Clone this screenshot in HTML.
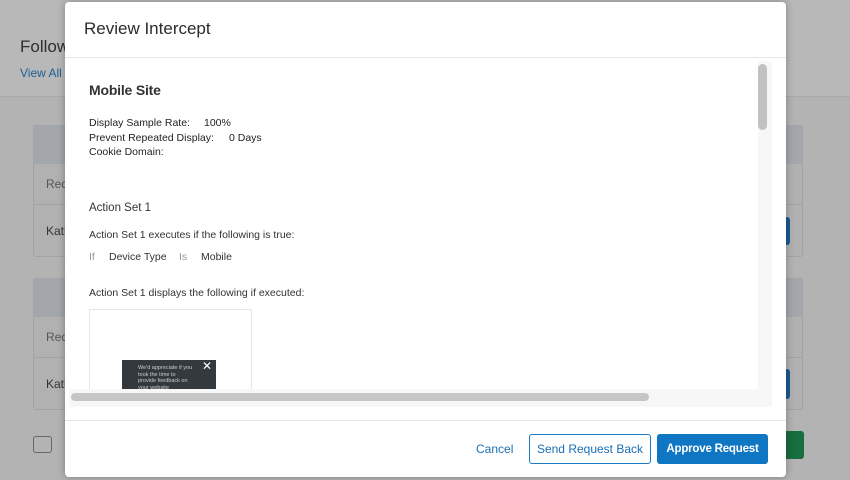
<!DOCTYPE html>
<html><head><style>
*{margin:0;padding:0;box-sizing:border-box}
body{width:850px;height:480px;overflow:hidden;background:#b3b3b3;font-family:"Liberation Sans",Arial,sans-serif;position:relative;color:#333}
.a{position:absolute;white-space:nowrap}
</style></head><body>
<div class="a" style="left:0;top:0;width:850px;height:97px;background:#b8b8b8;border-bottom:1px solid #a9a9a9"></div>
<div class="a" style="left:20px;top:37px;font-size:17px;color:#2e2e2e">Follow</div>
<div class="a" style="left:20px;top:66px;font-size:12px;color:#1a5f94">View All</div>
<div class="a" style="left:33px;top:125px;width:770px;height:132px;background:#b1b1b1;border:1px solid #a3a3a3;border-radius:3px"></div>
<div class="a" style="left:33px;top:125px;width:770px;height:39px;background:#a3a7ab"></div>
<div class="a" style="left:33px;top:204px;width:770px;height:1px;background:#a3a3a3"></div>
<div class="a" style="left:46px;top:177px;font-size:12px;color:#555">Req</div>
<div class="a" style="left:46px;top:224px;font-size:12px;color:#333">Kath</div>
<div class="a" style="left:33px;top:278px;width:770px;height:132px;background:#b1b1b1;border:1px solid #a3a3a3;border-radius:3px"></div>
<div class="a" style="left:33px;top:278px;width:770px;height:39px;background:#a3a7ab"></div>
<div class="a" style="left:33px;top:357px;width:770px;height:1px;background:#a3a3a3"></div>
<div class="a" style="left:46px;top:330px;font-size:12px;color:#555">Req</div>
<div class="a" style="left:46px;top:377px;font-size:12px;color:#333">Kath</div>
<div class="a" style="left:780px;top:217px;width:10px;height:28px;background:#1a5a90;border-radius:3px"></div>
<div class="a" style="left:780px;top:369px;width:10px;height:30px;background:#1a5a90;border-radius:3px"></div>
<div class="a" style="left:780px;top:431px;width:24px;height:28px;background:#176e3e;border-radius:3px"></div>
<div class="a" style="left:33px;top:436px;width:19px;height:17px;border:1px solid #666;border-radius:3px"></div>

<div class="a" style="left:65px;top:2px;width:721px;height:475px;background:#fff;border-radius:4px;box-shadow:0 0 8px rgba(0,0,0,.3)">
 <div class="a" style="left:19px;top:17px;font-size:17px;color:#2b2b2b">Review Intercept</div>
 <div class="a" style="left:0;top:55px;width:721px;height:1px;background:#e6e6e6"></div>
 <div class="a" style="left:4px;top:59px;width:703px;height:346px;background:#f7f7f7"></div>
 <div class="a" style="left:4px;top:59px;width:689px;height:328px;background:#fff;overflow:hidden">
  <div class="a" style="left:20px;top:21px;font-size:14px;color:#333;font-weight:bold;letter-spacing:-.2px">Mobile Site</div>
  <div class="a" style="left:20px;top:55px;font-size:10.5px;line-height:14.5px;color:#222">Display Sample Rate:<span class="a" style="left:115px">100%</span><br>Prevent Repeated Display:<span class="a" style="left:140px">0 Days</span><br>Cookie Domain:</div>
  <div class="a" style="left:20px;top:141px;font-size:11.5px;color:#333">Action Set 1</div>
  <div class="a" style="left:20px;top:168px;font-size:10.5px;color:#333">Action Set 1 executes if the following is true:</div>
  <div class="a" style="left:20px;top:190px;font-size:10.5px;color:#333"><span style="color:#999">If</span><span class="a" style="left:20px">Device Type</span><span class="a" style="left:90px;color:#999">Is</span><span class="a" style="left:112px">Mobile</span></div>
  <div class="a" style="left:20px;top:226px;font-size:10.5px;color:#333">Action Set 1 displays the following if executed:</div>
  <div class="a" style="left:20px;top:248px;width:163px;height:90px;border:1px solid #e6e6e6"></div>
  <div class="a" style="left:53px;top:299px;width:94px;height:40px;background:#33393c;color:#ccc;font-size:5.5px;line-height:6.5px;padding:5px 0 0 16px">We'd appreciate if you<br>took the time to<br>provide feedback on<br>your website<span class="a" style="left:80px;top:0;color:#fff;font-size:12px;line-height:12px">✕</span></div>
 </div>
 <div class="a" style="left:693px;top:62px;width:9px;height:66px;background:#c1c1c1;border-radius:5px"></div>
 <div class="a" style="left:6px;top:391px;width:578px;height:8px;background:#c6c6c6;border-radius:4px"></div>
 <div class="a" style="left:0;top:418px;width:721px;height:1px;background:#e6e6e6"></div>
 <div class="a" style="left:411px;top:440px;font-size:12px;color:#1a6fb5">Cancel</div>
 <div class="a" style="left:464px;top:432px;width:122px;height:30px;border:1px solid #1a7bc4;border-radius:3px;font-size:12px;color:#1a6fb5;text-align:center;line-height:28px">Send Request Back</div>
 <div class="a" style="left:592px;top:432px;width:111px;height:30px;background:#0f76c4;border-radius:3px;font-size:11.5px;color:#fff;font-weight:bold;text-align:center;line-height:30px;letter-spacing:-.2px">Approve Request</div>
</div>
</body></html>
